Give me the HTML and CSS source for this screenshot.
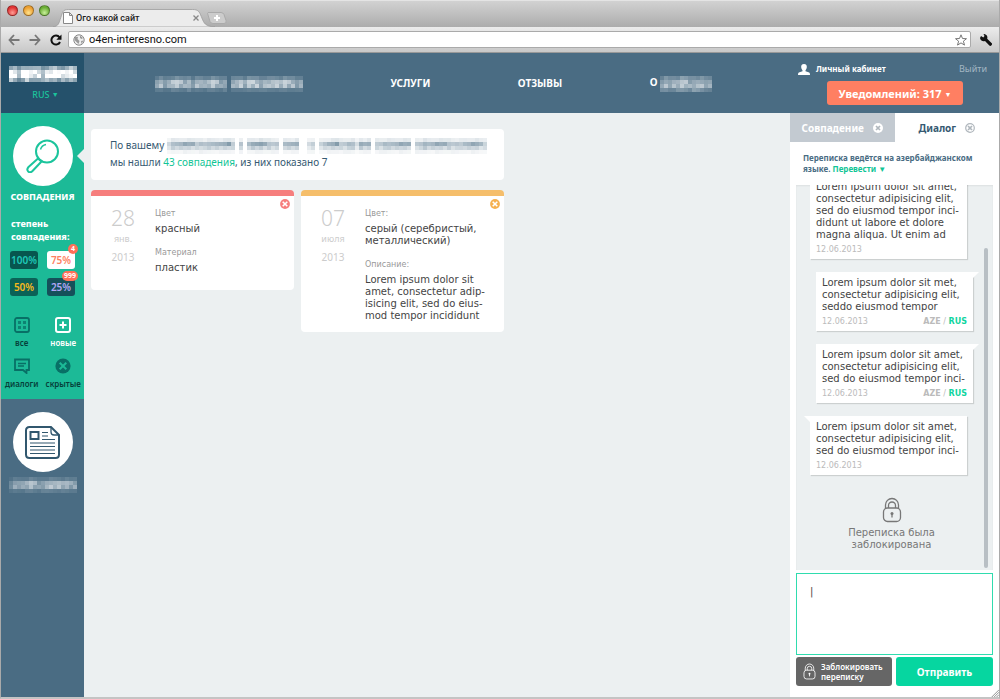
FILE: index.html
```html
<!DOCTYPE html>
<html lang="ru">
<head>
<meta charset="utf-8">
<title>Ого какой сайт</title>
<link rel="stylesheet" href="styles.css">
</head>
<body>
<svg class="defs" aria-hidden="true">
  <symbol id="lock" viewBox="0 0 20 26"><g fill="none" stroke="currentColor" stroke-width="1.3"><rect x="1.5" y="11" width="17" height="13.5" rx="4"/><path d="M3.5 11V8a6.5 6.5 0 0 1 13 0v3M6.5 11V8.500a3.500 3.500 0 0 1 7 0V11"/></g><circle cx="10" cy="16.500" r="1.500" fill="currentColor"/><path d="M10 17v3.500" stroke="currentColor" stroke-width="1.300"/></symbol>
  <symbol id="cross" viewBox="0 0 10 10"><circle cx="5" cy="5" r="4.900" fill="currentColor"/><path d="M2.700 2.700l4.600 4.600M7.300 2.700L2.700 7.300" stroke="#fff" stroke-width="1.600"/></symbol>
  <symbol id="cross-ring" viewBox="0 0 10 10"><circle cx="5" cy="5" r="4.300" fill="#fff" stroke="currentColor" stroke-width="1.200"/><path d="M3 3l4 4M7 3L3 7" stroke="currentColor" stroke-width="1.700"/></symbol>
  <symbol id="cross-solid" viewBox="0 0 10 10"><circle cx="5" cy="5" r="5" fill="#fff"/><path d="M3 3l4 4M7 3L3 7" stroke="#b0b7bd" stroke-width="1.700"/></symbol>
</svg>
<div class="window">
  <div class="titlebar">
    <div class="lights"><i class="light red"></i><i class="light amber"></i><i class="light green"></i></div>
    <div class="browser-tab">
      <svg class="tab-shape" viewBox="0 0 166 19" preserveAspectRatio="none"><path d="M0 19C6 18 6 15 8 9C10 3 10 .5 16 .5H143C149 .5 150 3 152 8C155 16 156 18 166 19Z" fill="#ececec" stroke="#999" stroke-width=".8"/></svg>
      <svg class="file-icon" viewBox="0 0 10 12"><path d="M.5.5h6l3 3v8h-9zM6.500.5v3h3" fill="#fff" stroke="#888"/></svg>
      <span class="tab-title">Ого какой сайт</span>
      <button class="tab-close" aria-label="Закрыть вкладку"><svg viewBox="0 0 6 6"><path d="M.5.5l5 5M5.500.5l-5 5" stroke="#888" stroke-width="1.300"/></svg></button>
    </div>
    <button class="new-tab" aria-label="Новая вкладка"><svg viewBox="0 0 20 12"><path d="M1 .5h13q2 0 3 2l2 6q1 3-2 3H6q-2 0-3-2L1 3Q0 .5 1 .5z" fill="#ccc" stroke="#aaa"/><path d="M10 3v6M7 6h6" stroke="#fff" stroke-width="2"/></svg></button>
  </div>
  <div class="toolbar">
    <button class="tool" aria-label="Назад"><svg viewBox="0 0 12 12"><path d="M6 1L1.500 6 6 11M2 6h9.500" fill="none" stroke="#777" stroke-width="1.800"/></svg></button>
    <button class="tool" aria-label="Вперёд"><svg viewBox="0 0 12 12"><path d="M6 1l4.500 5L6 11M10 6H.5" fill="none" stroke="#777" stroke-width="1.800"/></svg></button>
    <button class="tool" aria-label="Обновить"><svg viewBox="0 0 12 12"><path d="M9.500 3.300A4.500 4.500 0 1 0 10 8" fill="none" stroke="#111" stroke-width="2"/><path d="M11.500.5v5.200H6.300z" fill="#111"/></svg></button>
    <div class="address">
      <svg class="globe" viewBox="0 0 12 12"><circle cx="6" cy="6" r="5.200" fill="#eee" stroke="#888"/><path d="M2 2.500l3 .5-.5 2 2 2-1 3-2-2L1.500 6zM7 1.500L10 4 8.500 5 7 4zM8 7l2.500-.5L8.500 10z" fill="#999"/></svg>
      <input class="url" type="text" aria-label="Адрес" value="o4en-interesno.com">
      <svg class="star" viewBox="0 0 12 12"><path d="M6 .8l1.500 3.700 4 .2-3.100 2.500 1.100 3.900L6 8.900l-3.500 2.200 1.100-3.900L.5 4.700l4-.2z" fill="#fff" stroke="#777"/></svg>
    </div>
    <button class="tool wrench" aria-label="Настройки"><svg viewBox="0 0 12 12"><path d="M1 2l2.300 1.500L4.500 2 3.500 0a3.600 3.600 0 0 1 3.700 4.700l4.300 4.200a1.600 1.600 0 0 1-2.400 2.400L5 6.900A3.500 3.500 0 0 1 0 4z" fill="#111"/></svg></button>
  </div>

  <div class="page">
    <div class="brand">
      <svg class="mosaic" role="img" aria-label="Логотип" data-columns="97589678687977698" data-rows="5995"></svg>
      <button class="lang">RUS <small>▼</small></button>
    </div>
    <header class="header">
      <nav class="nav">
        <a href="#" aria-label="Раздел"><svg class="mosaic dim" data-columns="5645776684665676560567577867677676756" data-rows="3882"></svg></a>
        <a href="#">УСЛУГИ</a>
        <a href="#">ОТЗЫВЫ</a>
        <a href="#">О <svg class="mosaic dim" data-columns="5656677677655" data-rows="4784"></svg></a>
      </nav>
      <div class="account">
        <div class="account-links">
          <a class="cabinet" href="#"><svg viewBox="0 0 12 11"><path d="M6 0C8.300 0 9 1.500 8.800 3.300 8.700 4.800 8 5.600 7.500 6.300v1l3 1c1 .3 1.500 1 1.500 2.700H0C0 9.300.5 8.600 1.500 8.300l3-1v-1C4 5.600 3.300 4.800 3.200 3.300 3 1.500 3.700 0 6 0z" fill="#fff"/></svg>Личный кабинет</a>
          <a class="logout" href="#">Выйти</a>
        </div>
        <button class="notices">Уведомлений: 317 <small>▼</small></button>
      </div>
    </header>

    <aside class="sidebar">
      <section class="matches">
        <a class="round" href="#" aria-label="Совпадения"><svg viewBox="0 0 34 34"><g fill="none" stroke="#1bc49c" stroke-width="2"><circle cx="21" cy="12.500" r="11"/><path d="M14.500 10.500a7 7 0 0 1 5.500-5" stroke-width="1.500"/><path d="M12 19.500l-9.500 8.500c-3 3.500 1 7 4 4l9-9.500z" stroke-linejoin="round"/></g></svg></a>
        <i class="pointer"></i>
        <h2>СОВПАДЕНИЯ</h2>
        <p class="degree">степень совпадения:</p>
        <div class="pills">
          <button class="pill p100">100%</button>
          <button class="pill p75">75%<span class="badge">4</span></button>
          <button class="pill p50">50%</button>
          <button class="pill p25">25%<span class="badge">999</span></button>
        </div>
        <div class="filters">
          <button class="filter"><svg viewBox="0 0 16 16"><rect x="1" y="1" width="14" height="14" rx="2" fill="none" stroke="currentColor" stroke-width="1.800"/><path d="M4 4h3v3H4zM9 4h3v3H9zM4 9h3v3H4zM9 9h3v3H9z" fill="currentColor" fill-opacity=".75"/></svg>все</button>
          <button class="filter active"><svg viewBox="0 0 16 16"><rect x="1" y="1" width="14" height="14" rx="2" fill="none" stroke="currentColor" stroke-width="2"/><path d="M8 4.500v7M4.500 8h7" stroke="currentColor" stroke-width="2"/></svg>новые</button>
          <button class="filter"><svg viewBox="0 0 16 16"><path d="M1 1.500h14v10.500h-2.500v3l-3.500-3H1z" fill="none" stroke="currentColor" stroke-width="1.800"/><path d="M4 5.500h8M4 8h6" stroke="currentColor" stroke-width="1.300"/></svg>диалоги</button>
          <button class="filter"><svg viewBox="0 0 16 16"><circle cx="8" cy="8" r="7.600" fill="currentColor"/><path d="M4.700 4.700l6.600 6.600M11.300 4.700l-6.600 6.600" stroke="#1cba97" stroke-width="2"/></svg>скрытые</button>
        </div>
      </section>
      <section class="ads">
        <a class="round" href="#" aria-label="Объявления"><svg viewBox="0 0 35 33"><g fill="none" stroke="#31576e"><path d="M26 1H4.500Q1 1 1 4.500v24Q1 32 4.500 32h26q3.500 0 3.500-3.500V9z" stroke-width="2"/><path d="M26 1v5q0 3 3 3h5" stroke-width="1.300"/><rect x="5.500" y="6" width="8" height="7" stroke-width="2"/><path d="M17 6.500h6M17 10h6M17 13.500h13M5 17h25M5 20.500h25M5 24h25M5 27.500h25" stroke-width="1.200"/></g></svg></a>
        <svg class="mosaic dim" data-columns="35556765677776656" data-rows="2772"></svg>
      </section>
    </aside>

    <main class="content">
      <section class="summary">
        <p>По вашему <svg class="mosaic slate" data-columns="46667666766666676060677767660666600450456676676376606676667660667667667665667655" data-rows="2741"></svg></p>
        <p>мы нашли <a href="#">43 совпадения</a>, из них показано 7</p>
      </section>
      <div class="cards">
        <article class="card coral">
          <button class="dismiss" aria-label="Скрыть"><svg><use href="#cross"/></svg></button>
          <div class="date"><b>28</b><span>янв.</span><em>2013</em></div>
          <dl><dt>Цвет</dt><dd>красный</dd><dt>Материал</dt><dd>пластик</dd></dl>
        </article>
        <article class="card amber-card">
          <button class="dismiss" aria-label="Скрыть"><svg><use href="#cross"/></svg></button>
          <div class="date"><b>07</b><span>июля</span><em>2013</em></div>
          <dl><dt>Цвет:</dt><dd>серый (серебристый,<br>металлический)</dd><dt>Описание:</dt><dd>Lorem ipsum dolor sit<br>amet, consectetur adip-<br>isicing elit, sed do eius-<br>mod tempor incididunt</dd></dl>
        </article>
      </div>
    </main>

    <aside class="panel">
      <div class="tabs">
        <button class="tab">Совпадение <svg><use href="#cross-solid"/></svg></button>
        <button class="tab current">Диалог <svg><use href="#cross-ring"/></svg></button>
      </div>
      <p class="notice">Переписка ведётся на азербайджанском языке. <a href="#">Перевести ▼</a></p>
      <div class="chat">
        <div class="message">Lorem ipsum dolor sit amet,<br>consectetur adipisicing elit,<br>sed do eiusmod tempor inci-<br>didunt ut labore et dolore<br>magna aliqua. Ut enim ad<footer><time>12.06.2013</time></footer></div>
        <div class="message mine">Lorem ipsum dolor sit met,<br>consectetur adipisicing elit,<br>seddo eiusmod tempor<footer><time>12.06.2013</time><span><b>AZE</b> / <a href="#">RUS</a></span></footer></div>
        <div class="message mine">Lorem ipsum dolor sit amet,<br>consectetur adipisicing elit,<br>sed do eiusmod tempor inci-<footer><time>12.06.2013</time><span><b>AZE</b> / <a href="#">RUS</a></span></footer></div>
        <div class="message theirs">Lorem ipsum dolor sit amet,<br>consectetur adipisicing elit,<br>sed do eiusmod tempor inci-<footer><time>12.06.2013</time></footer></div>
        <div class="blocked"><svg><use href="#lock"/></svg>Переписка была<br>заблокирована</div>
        <i class="scrollbar"></i>
      </div>
      <textarea class="reply" aria-label="Сообщение">|</textarea>
      <div class="actions">
        <button class="block"><svg><use href="#lock"/></svg><span>Заблокировать<br>переписку</span></button>
        <button class="send">Отправить</button>
      </div>
    </aside>
  </div>
  <svg class="grip" viewBox="0 0 10 10" aria-hidden="true"><path d="M1 10l9-9M4 10l6-6M7 10l3-3" stroke="#777"/></svg>
</div>
<script src="mosaic.js"></script>
</body>
</html>
```
FILE: styles.css
```css
* { box-sizing: border-box; }
body { margin: 0; font-family: "Noto Sans", sans-serif; font-size: 10px; color: #444; }
button { margin: 0; padding: 0; border: 0; background: none; font: inherit; color: inherit; }
a { color: inherit; text-decoration: none; }
svg { display: block; flex: none; }
h2, p, dl, dd { margin: 0; }
.defs { position: absolute; width: 0; height: 0; }
.mosaic { display: inline-block; vertical-align: middle; color: #fff; }
.mosaic.dim { opacity: .72; }
.mosaic.slate { color: #54758b; opacity: .8; }

.window { position: relative; display: flex; flex-direction: column; min-height: 100vh; border: 1px solid #aaa; border-width: 0 1px 2px; border-bottom-color: #c4c4c4; }
.titlebar { display: flex; align-items: flex-end; height: 27px; background: linear-gradient(#d2d2d2, #acacac); border-top: 1px solid #e4e4e4; }
.lights { display: flex; gap: 5px; align-self: flex-start; padding: 4px 0 0 6px; width: 52px; }
.light { width: 11px; height: 11px; border-radius: 50%; border: 1px solid #0005; }
.red { background: radial-gradient(circle at 50% 75%, #ff9d95, #e03434 65%); }
.amber { background: radial-gradient(circle at 50% 75%, #ffe38d, #eda032 65%); }
.green { background: radial-gradient(circle at 50% 75%, #c8f09a, #6bae35 65%); }
.browser-tab { position: relative; display: flex; align-items: center; width: 162px; height: 18px; padding: 0 16px 0 10px; }
.tab-shape { position: absolute; inset: 0; width: 100%; height: 100%; }
.file-icon { position: relative; width: 10px; height: 12px; margin-right: 3px; }
.tab-title { position: relative; flex: 1; color: #222; font-family: Roboto, sans-serif; font-size: 9px; font-weight: 500; white-space: nowrap; }
.tab-close { position: relative; }
.tab-close svg { width: 6px; height: 6px; }
.new-tab { margin: 0 0 3px -8px; }
.new-tab svg { width: 20px; height: 12px; }
.toolbar { display: flex; align-items: center; gap: 9px; height: 26px; padding: 0 7px; background: linear-gradient(#ececec, #c8c8c8); border-bottom: 1px solid #999; }
.tool svg { width: 12px; height: 12px; }
.address { flex: 1; display: flex; align-items: center; height: 17px; margin-left: -3px; padding: 0 0 0 4px; background: #fff; border: 1px solid #aaa; border-radius: 2px; }
.globe, .star { width: 12px; height: 12px; }
.star { margin-right: 3px; }
.url { flex: 1; min-width: 0; padding: 0 0 0 4px; border: 0; outline: 0; background: none; font: 11px/15px Roboto, sans-serif; color: #111; }

.page { flex: 1; display: grid; grid-template-columns: 83px minmax(0, 1fr) 209px; grid-template-rows: 60px minmax(0, 1fr); background: #ecf0f1; }
.brand { display: flex; flex-direction: column; align-items: center; gap: 6px; padding-top: 13px; background: #25516b; }
.lang { padding-left: 6px; color: #1bc49c; font-size: 9px; line-height: 14px; font-weight: 500; }
small { font-size: 7px; vertical-align: 1px; }
.header { grid-column: 2 / 4; display: flex; gap: 86px; padding: 0 12px 0 71px; background: #4a6c83; color: #fff; }
.nav { flex: 1; display: flex; align-items: center; justify-content: space-between; font-size: 10px; font-weight: 700; line-height: 16px; white-space: nowrap; }
.account { width: 189px; padding-top: 9px; }
.account-links { display: flex; justify-content: space-between; align-items: center; font-size: 9px; line-height: 14px; }
.cabinet { display: flex; align-items: center; gap: 6px; font-size: 8px; font-weight: 700; }
.cabinet svg { width: 12px; height: 11px; }
.logout { color: #a4b7c3; }
.notices { height: 24px; width: 136px; margin: 5px 0 0 29px; border-radius: 3px; background: #ff7f62; font-size: 11px; font-weight: 700; }

.sidebar { display: flex; flex-direction: column; background: #4a6c83; }
.matches { position: relative; padding: 13px 0 10px; background: #1cba97; color: #fff; }
.round { display: flex; align-items: center; justify-content: center; width: 60px; height: 60px; margin: 0 auto; border-radius: 50%; background: #fff; }
.round svg { width: 34px; height: 34px; }
.pointer { position: absolute; right: 0; top: 36px; border: 7px solid transparent; border-right-color: #ecf0f1; border-left: 0; }
h2 { margin-top: 4px; font-size: 9px; line-height: 14px; font-weight: 800; text-align: center; }
.degree { margin-top: 13px; padding-left: 10px; font-size: 9px; line-height: 13px; font-weight: 800; }
.pills { display: grid; grid-template-columns: 28px 28px; gap: 9px; justify-content: start; margin-top: 8px; padding-left: 9px; }
.pill { position: relative; height: 18px; border-radius: 3px; background: #0b6257; font-size: 10px; font-weight: 600; line-height: 18px; }
.p100 { color: #1fc8b8; background: #07564f; }
.p75 { color: #ff7f62; background: #fff; }
.p50 { color: #f6b81c; }
.p25 { color: #b1a6f5; background: #15505a; }
.badge { position: absolute; right: -3px; top: -7px; min-width: 10px; height: 10px; padding: 0 2px; border-radius: 5px; background: #ff7058; color: #fff; font-size: 7px; font-weight: 700; line-height: 10px; }
.filters { display: grid; grid-template-columns: 1fr 1fr; row-gap: 10px; margin-top: 21px; color: #087066; }
.filter { display: flex; flex-direction: column; align-items: center; gap: 4px; font-size: 8px; line-height: 11px; font-weight: 600; color: #063f3a; }
.filter svg { width: 16px; height: 16px; color: #087066; }
.filter.active, .filter.active svg { color: #fff; }
.ads { display: flex; flex-direction: column; align-items: center; gap: 5px; padding-top: 13px; }
.ads .round svg { width: 35px; height: 33px; }

.content { padding: 16px 7px; }
.summary { max-width: 413px; padding: 8px 19px 9px; border-radius: 4px; background: #fff; color: #365a72; font-size: 10px; white-space: nowrap; }
.summary p { height: 17px; line-height: 17px; }
.summary .mosaic { vertical-align: -5px; }
.summary a { color: #11c596; }
.cards { display: grid; grid-template-columns: repeat(auto-fill, 203px); align-items: start; gap: 7px; margin-top: 10px; }
.card { position: relative; display: grid; grid-template-columns: 36px 1fr; gap: 14px; min-height: 100px; padding: 12px 10px 10px 14px; border-top: 6px solid; border-radius: 4px; background: #fff; }
.coral { border-color: #f67e7d; color: #f67e7d; }
.amber-card { border-color: #f5be6b; color: #f5b04f; }
.dismiss { position: absolute; top: 3px; right: 4px; }
.dismiss svg { width: 10px; height: 10px; }
.date { display: flex; flex-direction: column; align-items: center; color: #ccc; }
.date b { font-size: 21px; line-height: 20px; font-weight: 300; }
.date span { margin-top: 6px; font-size: 9px; line-height: 10px; }
.date em { margin-top: 7px; font-size: 10px; line-height: 12px; font-style: normal; }
dt { margin-top: 13px; font: 8px/10px "DejaVu Sans", sans-serif; color: #999; }
dt:first-child { margin-top: 1px; }
dd { margin-top: 4px; font: 10px/12px "DejaVu Sans", sans-serif; color: #444; white-space: nowrap; }

.panel { display: flex; flex-direction: column; padding-bottom: 11px; background: #fff; }
.tabs { display: grid; grid-template-columns: 1fr 1fr; height: 29px; }
.tab { display: flex; align-items: center; justify-content: center; gap: 9px; background: #c3cad1; color: #fff; font-size: 10px; font-weight: 700; }
.tab svg { width: 10px; height: 10px; color: #b0b7bd; }
.tab.current { background: #fff; color: #365a72; }
.notice { margin: 10px 6px 11px 13px; color: #4a6c83; font-size: 8px; line-height: 11px; font-weight: 700; }
.notice a { color: #11c596; }
.chat { position: relative; flex: 1 1 0; min-height: 0; display: flex; flex-direction: column; justify-content: flex-end; gap: 13px; margin: 0 6px; padding: 0 20px 19px 14px; overflow: hidden; background: #ecf0f1; font: 10px/12px "DejaVu Sans", sans-serif; box-shadow: inset 0 1px 2px #0001; }
.message { position: relative; flex: none; width: 157px; padding: 5px 6px 4px; background: #fff; box-shadow: 1px 1px 1px #0002; white-space: nowrap; }
.mine { align-self: flex-end; }
.mine::after, .theirs::after { content: ""; position: absolute; top: 0; border: 6px solid transparent; border-top-color: #fff; border-bottom: 0; }
.mine::after { left: 100%; border-left: 0; }
.theirs::after { right: 100%; border-right: 0; }
.message footer { display: flex; justify-content: space-between; margin-top: 4px; font-size: 8px; line-height: 10px; color: #bbb; }
.message a { color: #11d5a0; font-weight: 700; }
.blocked { margin-top: 9px; text-align: center; color: #777; }
.blocked svg { width: 20px; height: 26px; margin: 0 auto 4px; }
.scrollbar { position: absolute; right: 5px; top: 63px; bottom: 2px; width: 4px; border-radius: 2px; background: #b8bfc4; }
.reply { height: 82px; margin: 3px 6px 2px; padding: 12px 13px; resize: none; border: 1px solid #2fdcae; outline: 0; font: 10px/12px "DejaVu Sans", sans-serif; color: #444; }
.actions { display: grid; grid-template-columns: 96px 1fr; gap: 4px; margin: 0 6px; height: 29px; color: #fff; }
.block { display: flex; align-items: center; gap: 5px; padding-left: 7px; border-radius: 3px; background: #666; font-size: 8px; line-height: 10px; font-weight: 600; text-align: left; }
.block svg { width: 13px; height: 17px; }
.send { border-radius: 3px; background: #06d6a0; font-size: 10px; font-weight: 700; }
.grip { position: absolute; right: 0; bottom: 0; width: 8px; height: 8px; }
```
FILE: mosaic.js
```js
// Fills each masked label with a grid of translucent 4px tiles.
const TILE = 4;
document.querySelectorAll(".mosaic").forEach((svg) => {
  const columns = [...svg.dataset.columns].map(Number);
  const rows = [...svg.dataset.rows].map(Number);
  svg.setAttribute("width", columns.length * TILE);
  svg.setAttribute("height", rows.length * TILE);
  svg.setAttribute("shape-rendering", "crispEdges");
  rows.forEach((row, y) => columns.forEach((column, x) => {
    const variation = 0.65 + ((x * 7 + y * 11 + x * y * 3) % 9) / 18;
    const tile = document.createElementNS("http://www.w3.org/2000/svg", "rect");
    tile.setAttribute("x", x * TILE);
    tile.setAttribute("y", y * TILE);
    tile.setAttribute("width", TILE);
    tile.setAttribute("height", TILE);
    tile.setAttribute("fill", "currentColor");
    tile.setAttribute("fill-opacity", Math.min(1, column * row / 60 * variation));
    svg.append(tile);
  }));
});
```
